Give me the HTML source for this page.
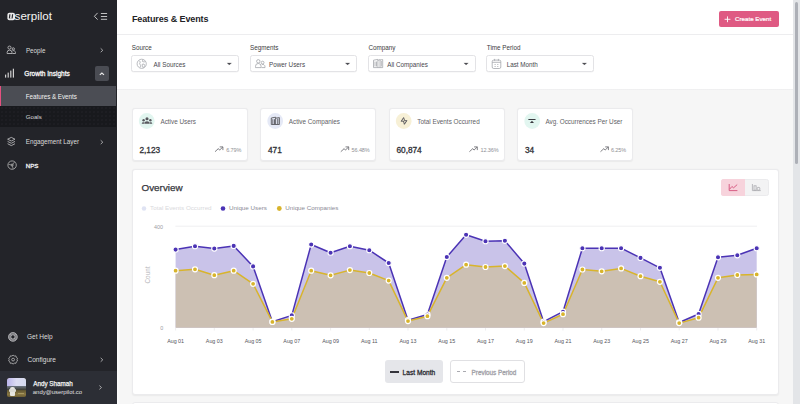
<!DOCTYPE html>
<html><head><meta charset="utf-8"><style>
html,body{margin:0;padding:0;width:800px;height:404px;overflow:hidden;background:#fff}
body{position:relative;font-family:"Liberation Sans",sans-serif}
.t{position:absolute;white-space:nowrap;line-height:1}
.ov{position:absolute;left:0;top:0}
.xl{font-family:"Liberation Sans",sans-serif;font-size:5.35px;fill:#55555c}
</style></head><body>
<div style="position:absolute;left:0px;top:0px;width:117px;height:404px;background:#232429"></div>
<div class="t" style="left:14.60px;top:10.08px;font-size:11.6px;color:#f4f4f4;">serpilot</div>
<div class="t" style="left:25.90px;top:47.57px;font-size:6.3px;color:#dcdcdc;">People</div>
<div class="t" style="left:24.30px;top:70.86px;font-size:6.55px;color:#f4f4f4;-webkit-text-stroke:0.3px #f4f4f4;">Growth Insights</div>
<div style="position:absolute;left:95px;top:66.2px;width:13.7px;height:14.4px;background:#4a4c53;border-radius:2px"></div>
<div style="position:absolute;left:0px;top:85.5px;width:116.3px;height:20.3px;background:#4b4d54"></div>
<div style="position:absolute;left:0px;top:85.5px;width:1.3px;height:20.3px;background:#e5507f"></div>
<div class="t" style="left:25.80px;top:93.57px;font-size:6.3px;color:#f2f2f2;letter-spacing:-0.05px;">Features &amp; Events</div>
<div style="position:absolute;left:0px;top:105.8px;width:116.3px;height:21.2px;background:radial-gradient(circle at 2px 2px,#212227 0.55px,rgba(0,0,0,0) 0.9px) 0 0/4px 4px,#18191d"></div>
<div class="t" style="left:25.80px;top:113.54px;font-size:6.1px;color:#dadadc;">Goals</div>
<div class="t" style="left:25.80px;top:139.47px;font-size:6.3px;color:#dcdcdc;">Engagement Layer</div>
<div class="t" style="left:25.80px;top:162.94px;font-size:6.1px;color:#f0f0f0;-webkit-text-stroke:0.3px #f0f0f0;">NPS</div>
<div class="t" style="left:27.00px;top:334.20px;font-size:6.5px;color:#dcdcdc;">Get Help</div>
<div class="t" style="left:27.40px;top:356.51px;font-size:6.6px;color:#dcdcdc;">Configure</div>
<div style="position:absolute;left:0px;top:370.9px;width:117px;height:33.1px;background:#2c2e35"></div>
<div style="position:absolute;left:7.2px;top:378.2px;width:19px;height:18.8px;border-radius:2.5px;overflow:hidden;background:#6a5c32"><div style="position:absolute;left:0;top:0;width:19px;height:7.8px;background:linear-gradient(90deg,#bab4ea,#dcdcf2 50%,#d4d9ee)"></div><div style="position:absolute;left:0;top:7.8px;width:19px;height:3.6px;background:linear-gradient(#6d7683,#3a3a30)"></div><div style="position:absolute;left:0;top:11.4px;width:19px;height:7.4px;background:linear-gradient(#5c5230,#8a7844 60%,#6b5d33)"></div><div style="position:absolute;left:3.2px;top:9.2px;width:4.2px;height:8.6px;background:#e6e5e0;border-radius:2px 2px 1px 1px"></div><div style="position:absolute;left:1.6px;top:11.2px;width:7.6px;height:2.2px;background:#dcdbd5;border-radius:1px"></div><div style="position:absolute;left:11px;top:14.8px;width:6px;height:1px;background:#a89860"></div></div>
<div class="t" style="left:33.20px;top:380.77px;font-size:6.3px;color:#f2f2f2;-webkit-text-stroke:0.25px #f2f2f2;">Andy Shamah</div>
<div class="t" style="left:32.80px;top:389.76px;font-size:5.95px;color:#e0e0e0;">andy@userpilot.co</div>
<div style="position:absolute;left:117px;top:0px;width:676px;height:404px;background:#f6f6f6"></div>
<div style="position:absolute;left:117px;top:89px;width:3px;height:315px;background:linear-gradient(90deg,#fdfdfd,#f6f6f7)"></div>
<div style="position:absolute;left:117px;top:0px;width:676px;height:89.3px;background:#fff"></div>
<div style="position:absolute;left:117px;top:89.0px;width:676px;height:1.3px;background:linear-gradient(#ececed,#f3f3f4)"></div>
<div style="position:absolute;left:117px;top:33.6px;width:676px;height:0.8px;background:#ededef"></div>
<div class="t" style="left:131.90px;top:14.98px;font-size:9.0px;color:#222226;font-weight:bold;letter-spacing:-0.12px;">Features &amp; Events</div>
<div style="position:absolute;left:719.2px;top:11px;width:59.6px;height:15.5px;background:#df5a83;border-radius:2px"></div>
<div class="t" style="left:735.00px;top:16.25px;font-size:6.2px;color:#ffffff;-webkit-text-stroke:0.2px #fff;">Create Event</div>
<div class="t" style="left:131.70px;top:44.87px;font-size:6.3px;color:#3b3b40;">Source</div>
<div style="position:absolute;left:131.2px;top:55.2px;width:107.8px;height:17.2px;border:1px solid #e3e3e6;box-sizing:border-box;border-radius:2.5px;background:#fff;box-shadow:0 0.6px 0.6px rgba(0,0,0,0.05)"></div>
<div class="t" style="left:153.50px;top:61.67px;font-size:6.3px;color:#47474d;">All Sources</div>
<div class="t" style="left:250.00px;top:44.87px;font-size:6.3px;color:#3b3b40;">Segments</div>
<div style="position:absolute;left:249.5px;top:55.2px;width:107.8px;height:17.2px;border:1px solid #e3e3e6;box-sizing:border-box;border-radius:2.5px;background:#fff;box-shadow:0 0.6px 0.6px rgba(0,0,0,0.05)"></div>
<div class="t" style="left:269.00px;top:61.67px;font-size:6.3px;color:#47474d;">Power Users</div>
<div class="t" style="left:368.50px;top:44.87px;font-size:6.3px;color:#3b3b40;">Company</div>
<div style="position:absolute;left:368.0px;top:55.2px;width:107.8px;height:17.2px;border:1px solid #e3e3e6;box-sizing:border-box;border-radius:2.5px;background:#fff;box-shadow:0 0.6px 0.6px rgba(0,0,0,0.05)"></div>
<div class="t" style="left:387.20px;top:61.67px;font-size:6.3px;color:#47474d;">All Companies</div>
<div class="t" style="left:486.80px;top:44.87px;font-size:6.3px;color:#3b3b40;">Time Period</div>
<div style="position:absolute;left:486.3px;top:55.2px;width:107.8px;height:17.2px;border:1px solid #e3e3e6;box-sizing:border-box;border-radius:2.5px;background:#fff;box-shadow:0 0.6px 0.6px rgba(0,0,0,0.05)"></div>
<div class="t" style="left:506.70px;top:61.67px;font-size:6.3px;color:#47474d;">Last Month</div>
<div style="position:absolute;left:131.8px;top:107.6px;width:116.2px;height:53.1px;background:#fff;border:1px solid #ebebed;box-sizing:border-box;border-radius:3px;box-shadow:0 0.8px 1.2px rgba(0,0,0,0.05)"></div>
<div class="t" style="left:160.45px;top:118.62px;font-size:6.35px;color:#5f5f66;">Active Users</div>
<div class="t" style="left:139.50px;top:146.07px;font-size:8.3px;color:#303036;letter-spacing:-0.05px;-webkit-text-stroke:0.3px #303036;">2,123</div>
<div class="t" style="left:226.20px;top:147.64px;font-size:5.5px;color:#8f8f95;letter-spacing:-0.12px;">6.79%</div>
<div style="position:absolute;left:260.3px;top:107.6px;width:116.2px;height:53.1px;background:#fff;border:1px solid #ebebed;box-sizing:border-box;border-radius:3px;box-shadow:0 0.8px 1.2px rgba(0,0,0,0.05)"></div>
<div class="t" style="left:288.75px;top:118.62px;font-size:6.35px;color:#5f5f66;">Active Companies</div>
<div class="t" style="left:268.00px;top:146.07px;font-size:8.3px;color:#303036;letter-spacing:-0.05px;-webkit-text-stroke:0.3px #303036;">471</div>
<div class="t" style="left:351.60px;top:147.64px;font-size:5.5px;color:#8f8f95;letter-spacing:-0.12px;">56.48%</div>
<div style="position:absolute;left:388.8px;top:107.6px;width:116.2px;height:53.1px;background:#fff;border:1px solid #ebebed;box-sizing:border-box;border-radius:3px;box-shadow:0 0.8px 1.2px rgba(0,0,0,0.05)"></div>
<div class="t" style="left:417.25px;top:118.62px;font-size:6.35px;color:#5f5f66;">Total Events Occurred</div>
<div class="t" style="left:396.50px;top:146.07px;font-size:8.3px;color:#303036;letter-spacing:-0.05px;-webkit-text-stroke:0.3px #303036;">60,874</div>
<div class="t" style="left:480.50px;top:147.64px;font-size:5.5px;color:#8f8f95;letter-spacing:-0.12px;">12.36%</div>
<div style="position:absolute;left:517.3px;top:107.6px;width:116.2px;height:53.1px;background:#fff;border:1px solid #ebebed;box-sizing:border-box;border-radius:3px;box-shadow:0 0.8px 1.2px rgba(0,0,0,0.05)"></div>
<div class="t" style="left:545.40px;top:118.62px;font-size:6.35px;color:#5f5f66;">Avg. Occurrences Per User</div>
<div class="t" style="left:525.00px;top:146.07px;font-size:8.3px;color:#303036;letter-spacing:-0.05px;-webkit-text-stroke:0.3px #303036;">34</div>
<div class="t" style="left:611.00px;top:147.64px;font-size:5.5px;color:#8f8f95;letter-spacing:-0.12px;">6.25%</div>
<div style="position:absolute;left:131.6px;top:169.4px;width:647.3px;height:225.9px;background:#fff;border:1px solid #ebebed;box-sizing:border-box;border-radius:3px;box-shadow:0 0.8px 1.5px rgba(0,0,0,0.05)"></div>
<div style="position:absolute;left:131.6px;top:402px;width:647.3px;height:10px;background:#fff;border:1px solid #ebebed;box-sizing:border-box;border-radius:3px"></div>
<div class="t" style="left:141.50px;top:182.62px;font-size:9.9px;color:#36363c;-webkit-text-stroke:0.25px #36363c;">Overview</div>
<div style="position:absolute;left:721px;top:179.1px;width:47.6px;height:16.5px;background:#f3f3f4;border:1px solid #ebebed;box-sizing:border-box;border-radius:2.5px"></div>
<div style="position:absolute;left:721px;top:179.1px;width:24px;height:16.5px;background:#f7d3dc;border-radius:2.5px 0 0 2.5px"></div>
<div class="t" style="left:150.10px;top:205.21px;font-size:6.25px;color:#d9d9dc;">Total Events Occurred</div>
<div class="t" style="left:229.00px;top:205.21px;font-size:6.25px;color:#8b8b96;">Unique Users</div>
<div class="t" style="left:285.25px;top:205.21px;font-size:6.25px;color:#8b8b96;">Unique Companies</div>
<div class="t" style="left:163.00px;top:225.43px;font-size:5.4px;color:#9c9ca2;transform:translateX(-100%);">400</div>
<div class="t" style="left:163.20px;top:325.53px;font-size:5.4px;color:#9c9ca2;transform:translateX(-100%);">0</div>
<div class="t" style="left:147.6px;top:274.7px;font-size:6.35px;color:#b3b3b7;transform:translate(-50%,-50%) rotate(-90deg);line-height:1">Count</div>
<div style="position:absolute;left:384.6px;top:360px;width:58.4px;height:23px;background:#e5e6ea;border-radius:3px"></div>
<div style="position:absolute;left:390px;top:371.3px;width:8.6px;height:1.3px;background:#35353c"></div>
<div class="t" style="left:402.60px;top:369.71px;font-size:6.6px;color:#2e2e34;-webkit-text-stroke:0.3px #2e2e34;">Last Month</div>
<div style="position:absolute;left:450.2px;top:360px;width:75.2px;height:23px;background:#fff;border:1px solid #e0e0e3;box-sizing:border-box;border-radius:3px"></div>
<div style="position:absolute;left:457px;top:371.2px;width:3.4px;height:1px;background:#aaaab0"></div>
<div style="position:absolute;left:462.6px;top:371.2px;width:3.4px;height:1px;background:#aaaab0"></div>
<div class="t" style="left:471.60px;top:369.62px;font-size:6.35px;color:#a2a2a8;-webkit-text-stroke:0.3px #a2a2a8;">Previous Period</div>
<div style="position:absolute;left:793px;top:0px;width:7px;height:404px;background:#e3e5e8"></div>
<div style="position:absolute;left:794.9px;top:1.9px;width:3.4px;height:162.1px;background:#adb0b7;border-radius:2px"></div>
<svg class="ov" width="800" height="404" viewBox="0 0 800 404">
<rect x="7.4" y="12.7" width="7.6" height="7.6" rx="2" fill="#ececec"/>
<path d="M9.9,14.2 L9.4,18.4 M12.6,14.2 L12.1,18.4" stroke="#2a2b30" stroke-width="1.2"/><path d="M9.5,18.6 L12.0,18.6" stroke="#9a9a9e" stroke-width="0.6"/>
<path d="M97.6,12.9 L94.4,16.3 L97.6,19.6" fill="none" stroke="#d4d4d4" stroke-width="0.9"/><g stroke="#d4d4d4" stroke-width="0.9"><line x1="100.9" y1="13.5" x2="107.1" y2="13.5"/><line x1="100.9" y1="16.5" x2="107.1" y2="16.5"/><line x1="100.9" y1="19.3" x2="107.1" y2="19.3"/></g>
<g fill="none" stroke="#b2b2b4" stroke-width="0.95"><circle cx="9.5" cy="47.6" r="1.55"/><path d="M7.1,53.5 v-0.9 a2.45,2.45 0 0 1 4.9,0 v0.9 z"/><circle cx="13.3" cy="48.9" r="1.15"/><path d="M12.5,50.9 a2.0,2.0 0 0 1 3.0,1.7 v0.9 h-3.2"/></g>
<path d="M100.7,48.4 L102.8,50.3 L100.7,52.2" fill="none" stroke="#b2b2b4" stroke-width="0.9"/>
<g fill="#d0d0d0"><rect x="5.0" y="74.6" width="1.2" height="3.0"/><rect x="7.6" y="72.6" width="1.2" height="5.0"/><rect x="10.2" y="70.6" width="1.2" height="7.0"/><rect x="12.8" y="68.7" width="1.2" height="8.9"/></g>
<path d="M99.8,74.9 L101.9,73.0 L104.0,74.9" fill="none" stroke="#ececec" stroke-width="1.1"/>
<g fill="none" stroke="#b2b2b4" stroke-width="0.9" stroke-linejoin="round"><path d="M11.3,137.4 L15.0,139.2 L11.3,141.0 L7.6,139.2 Z"/><path d="M7.6,141.4 L11.3,143.3 L15.0,141.4"/><path d="M7.6,143.7 L11.3,145.6 L15.0,143.7"/></g>
<path d="M100.7,140.3 L102.8,142.2 L100.7,144.1" fill="none" stroke="#b2b2b4" stroke-width="0.9"/>
<circle cx="12.1" cy="165.1" r="4.2" fill="none" stroke="#a9a9a9" stroke-width="0.9"/><circle cx="12.1" cy="165.1" r="1.5" fill="#8c8c8c"/><g stroke="#8f8f8f" stroke-width="0.9"><path d="M12.1,165.1 L8.3,164.2 M12.1,165.1 L14.6,161.9 M12.1,165.1 L13.2,169.0"/></g>
<circle cx="12.9" cy="336.9" r="3.3" fill="none" stroke="#7c7c80" stroke-width="2.3"/><circle cx="12.9" cy="336.9" r="4.4" fill="none" stroke="#c2c2c4" stroke-width="0.75"/><circle cx="12.9" cy="336.9" r="2.1" fill="none" stroke="#c2c2c4" stroke-width="0.7"/><g stroke="#c2c2c4" stroke-width="0.8"><path d="M10.4,334.4 L11.4,335.4 M15.4,334.4 L14.4,335.4 M10.4,339.4 L11.4,338.4 M15.4,339.4 L14.4,338.4"/></g>
<g fill="none" stroke="#b2b2b4" stroke-width="0.85"><circle cx="13.1" cy="359.6" r="1.4"/><path d="M13.1,355.2 L14.4,356.0 L15.9,355.9 L16.3,357.3 L17.5,358.2 L17.0,359.6 L17.5,361.0 L16.3,361.9 L15.9,363.3 L14.4,363.2 L13.1,364.0 L11.8,363.2 L10.3,363.3 L9.9,361.9 L8.7,361.0 L9.2,359.6 L8.7,358.2 L9.9,357.3 L10.3,355.9 L11.8,356.0 Z"/></g>
<path d="M100.7,357.9 L102.8,359.8 L100.7,361.7" fill="none" stroke="#b2b2b4" stroke-width="0.9"/>
<path d="M99.4,385.6 L101.5,387.5 L99.4,389.4" fill="none" stroke="#b2b2b4" stroke-width="0.9"/>
<path d="M727.5,16.4 v5.8 M724.6,19.3 h5.8" stroke="#fff" stroke-width="0.9"/>
<path d="M227.10,62.9 L231.50,62.9 L229.30,65.1 Z" fill="#4c4c52" stroke="#4c4c52" stroke-width="0.2" stroke-linejoin="round"/>
<path d="M345.40,62.9 L349.80,62.9 L347.60,65.1 Z" fill="#4c4c52" stroke="#4c4c52" stroke-width="0.2" stroke-linejoin="round"/>
<path d="M463.90,62.9 L468.30,62.9 L466.10,65.1 Z" fill="#4c4c52" stroke="#4c4c52" stroke-width="0.2" stroke-linejoin="round"/>
<path d="M582.20,62.9 L586.60,62.9 L584.40,65.1 Z" fill="#4c4c52" stroke="#4c4c52" stroke-width="0.2" stroke-linejoin="round"/>
<g fill="none" stroke="#a3a6ab" stroke-width="0.75"><circle cx="141.7" cy="63.8" r="4.6"/><path d="M139.2,60.6 L140.3,62.0 L139.6,63.8 L140.6,65.3 L140.2,67.4 M143.0,59.5 L142.4,61.4 L144.2,62.0 L145.3,61.2 M142.2,64.3 L144.0,64.0 L144.8,65.6 L143.5,67.5 L142.3,66.8 Z"/></g>
<g fill="none" stroke="#a3a6ab" stroke-width="0.8"><circle cx="258.3" cy="61.3" r="1.7"/><path d="M255.5,67.6 v-1.3 a2.8,2.8 0 0 1 5.6,0 v1.3 z"/><circle cx="262.6" cy="62.6" r="1.4"/><path d="M261.8,64.6 a2.3,2.3 0 0 1 3.2,2.0 v1.0 h-3.4"/></g>
<g fill="none" stroke="#a3a6ab" stroke-width="0.8"><path d="M373.5,67.6 V60.2 L377.9,59.4 V67.6 M377.9,60.4 L380.0,59.6 V67.6 M380.0,60.0 L382.7,59.6 V67.6 H373.5"/><path d="M375.0,61.5 V66.5 M376.5,61.5 V66.5 M381.3,61.0 V66.5"/></g>
<g fill="none" stroke="#a3a6ab" stroke-width="0.8"><rect x="492.2" y="60.1" width="8.6" height="8.4" rx="1.5"/><path d="M492.2,62.3 H500.8 M494.6,58.9 V60.8 M498.4,58.9 V60.8"/></g><g fill="#a3a6ab"><rect x="494.6" y="64.0" width="1.0" height="0.9"/><rect x="497.3" y="64.0" width="1.0" height="0.9"/><rect x="494.6" y="66.0" width="1.0" height="0.9"/><rect x="497.3" y="66.0" width="1.0" height="0.9"/></g>
<circle cx="146.70" cy="121.0" r="7.9" fill="#e2f6f0"/>
<path d="M215.0,151.7 L218.4,148.6 L219.6,150.1 L222.8,147.0 M219.7,146.9 L222.9,146.9 L222.9,150.1" fill="none" stroke="#6a6a70" stroke-width="0.85"/>
<circle cx="275.20" cy="121.0" r="7.9" fill="#e5e9f6"/>
<path d="M340.8,151.7 L344.2,148.6 L345.4,150.1 L348.6,147.0 M345.5,146.9 L348.7,146.9 L348.7,150.1" fill="none" stroke="#6a6a70" stroke-width="0.85"/>
<circle cx="403.70" cy="121.0" r="7.9" fill="#f7f0d6"/>
<path d="M469.4,151.7 L472.8,148.6 L474.0,150.1 L477.2,147.0 M474.1,146.9 L477.3,146.9 L477.3,150.1" fill="none" stroke="#6a6a70" stroke-width="0.85"/>
<circle cx="532.20" cy="121.0" r="7.9" fill="#e2f6f0"/>
<path d="M600.5,151.7 L603.9,148.6 L605.1,150.1 L608.3,147.0 M605.2,146.9 L608.4,146.9 L608.4,150.1" fill="none" stroke="#6a6a70" stroke-width="0.85"/>
<g fill="#58585e"><circle cx="147.0" cy="118.7" r="1.55"/><circle cx="143.6" cy="120.3" r="1.2"/><circle cx="150.4" cy="120.3" r="1.2"/><path d="M144.5,123.8 V122.9 a2.5,1.6 0 0 1 5,0 V123.8 z"/><path d="M141.8,123.8 V123.2 a1.6,1.2 0 0 1 3.0,-0.4 L144.0,123.8 z"/><path d="M152.2,123.8 V123.2 a1.6,1.2 0 0 0 -3.0,-0.4 L150.0,123.8 z"/></g>
<g fill="none" stroke="#5a5a60" stroke-width="0.9"><path d="M271.3,124.5 V118.0 L275.6,117.2 V124.5 M275.6,118.2 L279.4,117.6 V124.5 H271.3"/></g><g fill="#5a5a60"><rect x="272.4" y="119.2" width="0.9" height="5"/><rect x="274.0" y="119.2" width="0.9" height="5"/><rect x="277.3" y="118.6" width="1.0" height="5.6"/></g>
<path d="M403.6,117.6 L401.2,121.3 L403.5,121.0 L404.4,124.3 L406.9,120.6 L404.7,120.8 Z" fill="none" stroke="#4a4a50" stroke-width="0.9" stroke-linejoin="round"/>
<g fill="#3a3a40"><rect x="528.3" y="118.9" width="7.3" height="1.2" rx="0.4"/><path d="M531.95,120.7 L534.0,122.9 L529.9,122.9 Z"/></g>
<path d="M729.2,184.0 V190.6 H737.4 M729.6,189.2 L731.9,186.5 L733.6,187.8 L737.2,184.6" fill="none" stroke="#d4507a" stroke-width="0.9"/><g fill="none" stroke="#a9a9ae" stroke-width="0.8"><path d="M752.4,184.0 V190.6 H760.8"/><rect x="754.0" y="185.8" width="2.1" height="4.4"/><rect x="757.2" y="187.4" width="2.6" height="2.8" rx="0.8"/></g>
<circle cx="144" cy="208.5" r="2.25" fill="#dfe3f3"/><circle cx="223" cy="208.5" r="2.3" fill="#4b33b5"/><circle cx="279.3" cy="208.5" r="2.4" fill="#d8b42c"/>
<line x1="175.4" y1="226.2" x2="757" y2="226.2" stroke="#ebebed" stroke-width="0.8"/>
<path d="M175.6,327.8 L175.6,249.6 L195.0,246.2 L214.3,248.5 L233.7,245.9 L253.1,266.4 L272.4,321.7 L291.8,315.4 L311.2,244.5 L330.6,252.7 L349.9,246.2 L369.3,250.2 L388.7,263.0 L408.0,320.2 L427.4,314.5 L446.8,257.0 L466.1,234.8 L485.5,241.2 L504.9,240.8 L524.3,263.6 L543.6,321.7 L563.0,311.7 L582.4,248.2 L601.7,248.2 L621.1,248.2 L640.5,257.9 L659.9,267.8 L679.2,322.5 L698.6,314.0 L718.0,257.3 L737.3,255.3 L756.7,248.2 L756.7,327.8 Z" fill="#c9c3e9"/>
<path d="M175.6,327.8 L175.6,270.7 L195.0,269.3 L214.3,275.2 L233.7,270.7 L253.1,283.8 L272.4,321.9 L291.8,318.8 L311.2,270.7 L330.6,275.3 L349.9,270.1 L369.3,273.0 L388.7,280.6 L408.0,321.1 L427.4,316.2 L446.8,277.8 L466.1,264.7 L485.5,267.0 L504.9,266.1 L524.3,282.9 L543.6,323.1 L563.0,314.2 L582.4,269.5 L601.7,271.3 L621.1,268.4 L640.5,276.2 L659.9,281.8 L679.2,323.1 L698.6,317.7 L718.0,277.8 L737.3,275.0 L756.7,274.4 L756.7,327.8 Z" fill="#ccc0b3"/>
<line x1="175.6" y1="328" x2="175.6" y2="330.5" stroke="#e2e2e4" stroke-width="0.6"/>
<line x1="214.3" y1="328" x2="214.3" y2="330.5" stroke="#e2e2e4" stroke-width="0.6"/>
<line x1="253.1" y1="328" x2="253.1" y2="330.5" stroke="#e2e2e4" stroke-width="0.6"/>
<line x1="291.8" y1="328" x2="291.8" y2="330.5" stroke="#e2e2e4" stroke-width="0.6"/>
<line x1="330.6" y1="328" x2="330.6" y2="330.5" stroke="#e2e2e4" stroke-width="0.6"/>
<line x1="369.3" y1="328" x2="369.3" y2="330.5" stroke="#e2e2e4" stroke-width="0.6"/>
<line x1="408.0" y1="328" x2="408.0" y2="330.5" stroke="#e2e2e4" stroke-width="0.6"/>
<line x1="446.8" y1="328" x2="446.8" y2="330.5" stroke="#e2e2e4" stroke-width="0.6"/>
<line x1="485.5" y1="328" x2="485.5" y2="330.5" stroke="#e2e2e4" stroke-width="0.6"/>
<line x1="524.3" y1="328" x2="524.3" y2="330.5" stroke="#e2e2e4" stroke-width="0.6"/>
<line x1="563.0" y1="328" x2="563.0" y2="330.5" stroke="#e2e2e4" stroke-width="0.6"/>
<line x1="601.7" y1="328" x2="601.7" y2="330.5" stroke="#e2e2e4" stroke-width="0.6"/>
<line x1="640.5" y1="328" x2="640.5" y2="330.5" stroke="#e2e2e4" stroke-width="0.6"/>
<line x1="679.2" y1="328" x2="679.2" y2="330.5" stroke="#e2e2e4" stroke-width="0.6"/>
<line x1="718.0" y1="328" x2="718.0" y2="330.5" stroke="#e2e2e4" stroke-width="0.6"/>
<line x1="756.7" y1="328" x2="756.7" y2="330.5" stroke="#e2e2e4" stroke-width="0.6"/>
<polyline points="175.6,249.6 195.0,246.2 214.3,248.5 233.7,245.9 253.1,266.4 272.4,321.7 291.8,315.4 311.2,244.5 330.6,252.7 349.9,246.2 369.3,250.2 388.7,263.0 408.0,320.2 427.4,314.5 446.8,257.0 466.1,234.8 485.5,241.2 504.9,240.8 524.3,263.6 543.6,321.7 563.0,311.7 582.4,248.2 601.7,248.2 621.1,248.2 640.5,257.9 659.9,267.8 679.2,322.5 698.6,314.0 718.0,257.3 737.3,255.3 756.7,248.2" fill="none" stroke="#4b33b5" stroke-width="1.5" stroke-linejoin="round"/>
<polyline points="175.6,270.7 195.0,269.3 214.3,275.2 233.7,270.7 253.1,283.8 272.4,321.9 291.8,318.8 311.2,270.7 330.6,275.3 349.9,270.1 369.3,273.0 388.7,280.6 408.0,321.1 427.4,316.2 446.8,277.8 466.1,264.7 485.5,267.0 504.9,266.1 524.3,282.9 543.6,323.1 563.0,314.2 582.4,269.5 601.7,271.3 621.1,268.4 640.5,276.2 659.9,281.8 679.2,323.1 698.6,317.7 718.0,277.8 737.3,275.0 756.7,274.4" fill="none" stroke="#d8b42c" stroke-width="1.5" stroke-linejoin="round"/>
<circle cx="175.6" cy="249.6" r="2.6" fill="#4b33b5" stroke="#fff" stroke-width="1.1"/>
<circle cx="195.0" cy="246.2" r="2.6" fill="#4b33b5" stroke="#fff" stroke-width="1.1"/>
<circle cx="214.3" cy="248.5" r="2.6" fill="#4b33b5" stroke="#fff" stroke-width="1.1"/>
<circle cx="233.7" cy="245.9" r="2.6" fill="#4b33b5" stroke="#fff" stroke-width="1.1"/>
<circle cx="253.1" cy="266.4" r="2.6" fill="#4b33b5" stroke="#fff" stroke-width="1.1"/>
<circle cx="272.4" cy="321.7" r="2.6" fill="#4b33b5" stroke="#fff" stroke-width="1.1"/>
<circle cx="291.8" cy="315.4" r="2.6" fill="#4b33b5" stroke="#fff" stroke-width="1.1"/>
<circle cx="311.2" cy="244.5" r="2.6" fill="#4b33b5" stroke="#fff" stroke-width="1.1"/>
<circle cx="330.6" cy="252.7" r="2.6" fill="#4b33b5" stroke="#fff" stroke-width="1.1"/>
<circle cx="349.9" cy="246.2" r="2.6" fill="#4b33b5" stroke="#fff" stroke-width="1.1"/>
<circle cx="369.3" cy="250.2" r="2.6" fill="#4b33b5" stroke="#fff" stroke-width="1.1"/>
<circle cx="388.7" cy="263.0" r="2.6" fill="#4b33b5" stroke="#fff" stroke-width="1.1"/>
<circle cx="408.0" cy="320.2" r="2.6" fill="#4b33b5" stroke="#fff" stroke-width="1.1"/>
<circle cx="427.4" cy="314.5" r="2.6" fill="#4b33b5" stroke="#fff" stroke-width="1.1"/>
<circle cx="446.8" cy="257.0" r="2.6" fill="#4b33b5" stroke="#fff" stroke-width="1.1"/>
<circle cx="466.1" cy="234.8" r="2.6" fill="#4b33b5" stroke="#fff" stroke-width="1.1"/>
<circle cx="485.5" cy="241.2" r="2.6" fill="#4b33b5" stroke="#fff" stroke-width="1.1"/>
<circle cx="504.9" cy="240.8" r="2.6" fill="#4b33b5" stroke="#fff" stroke-width="1.1"/>
<circle cx="524.3" cy="263.6" r="2.6" fill="#4b33b5" stroke="#fff" stroke-width="1.1"/>
<circle cx="543.6" cy="321.7" r="2.6" fill="#4b33b5" stroke="#fff" stroke-width="1.1"/>
<circle cx="563.0" cy="311.7" r="2.6" fill="#4b33b5" stroke="#fff" stroke-width="1.1"/>
<circle cx="582.4" cy="248.2" r="2.6" fill="#4b33b5" stroke="#fff" stroke-width="1.1"/>
<circle cx="601.7" cy="248.2" r="2.6" fill="#4b33b5" stroke="#fff" stroke-width="1.1"/>
<circle cx="621.1" cy="248.2" r="2.6" fill="#4b33b5" stroke="#fff" stroke-width="1.1"/>
<circle cx="640.5" cy="257.9" r="2.6" fill="#4b33b5" stroke="#fff" stroke-width="1.1"/>
<circle cx="659.9" cy="267.8" r="2.6" fill="#4b33b5" stroke="#fff" stroke-width="1.1"/>
<circle cx="679.2" cy="322.5" r="2.6" fill="#4b33b5" stroke="#fff" stroke-width="1.1"/>
<circle cx="698.6" cy="314.0" r="2.6" fill="#4b33b5" stroke="#fff" stroke-width="1.1"/>
<circle cx="718.0" cy="257.3" r="2.6" fill="#4b33b5" stroke="#fff" stroke-width="1.1"/>
<circle cx="737.3" cy="255.3" r="2.6" fill="#4b33b5" stroke="#fff" stroke-width="1.1"/>
<circle cx="756.7" cy="248.2" r="2.6" fill="#4b33b5" stroke="#fff" stroke-width="1.1"/>
<circle cx="175.6" cy="270.7" r="2.5" fill="#d8b42c" stroke="#fff" stroke-width="1.2"/>
<circle cx="195.0" cy="269.3" r="2.5" fill="#d8b42c" stroke="#fff" stroke-width="1.2"/>
<circle cx="214.3" cy="275.2" r="2.5" fill="#d8b42c" stroke="#fff" stroke-width="1.2"/>
<circle cx="233.7" cy="270.7" r="2.5" fill="#d8b42c" stroke="#fff" stroke-width="1.2"/>
<circle cx="253.1" cy="283.8" r="2.5" fill="#d8b42c" stroke="#fff" stroke-width="1.2"/>
<circle cx="272.4" cy="321.9" r="2.5" fill="#d8b42c" stroke="#fff" stroke-width="1.2"/>
<circle cx="291.8" cy="318.8" r="2.5" fill="#d8b42c" stroke="#fff" stroke-width="1.2"/>
<circle cx="311.2" cy="270.7" r="2.5" fill="#d8b42c" stroke="#fff" stroke-width="1.2"/>
<circle cx="330.6" cy="275.3" r="2.5" fill="#d8b42c" stroke="#fff" stroke-width="1.2"/>
<circle cx="349.9" cy="270.1" r="2.5" fill="#d8b42c" stroke="#fff" stroke-width="1.2"/>
<circle cx="369.3" cy="273.0" r="2.5" fill="#d8b42c" stroke="#fff" stroke-width="1.2"/>
<circle cx="388.7" cy="280.6" r="2.5" fill="#d8b42c" stroke="#fff" stroke-width="1.2"/>
<circle cx="408.0" cy="321.1" r="2.5" fill="#d8b42c" stroke="#fff" stroke-width="1.2"/>
<circle cx="427.4" cy="316.2" r="2.5" fill="#d8b42c" stroke="#fff" stroke-width="1.2"/>
<circle cx="446.8" cy="277.8" r="2.5" fill="#d8b42c" stroke="#fff" stroke-width="1.2"/>
<circle cx="466.1" cy="264.7" r="2.5" fill="#d8b42c" stroke="#fff" stroke-width="1.2"/>
<circle cx="485.5" cy="267.0" r="2.5" fill="#d8b42c" stroke="#fff" stroke-width="1.2"/>
<circle cx="504.9" cy="266.1" r="2.5" fill="#d8b42c" stroke="#fff" stroke-width="1.2"/>
<circle cx="524.3" cy="282.9" r="2.5" fill="#d8b42c" stroke="#fff" stroke-width="1.2"/>
<circle cx="543.6" cy="323.1" r="2.5" fill="#d8b42c" stroke="#fff" stroke-width="1.2"/>
<circle cx="563.0" cy="314.2" r="2.5" fill="#d8b42c" stroke="#fff" stroke-width="1.2"/>
<circle cx="582.4" cy="269.5" r="2.5" fill="#d8b42c" stroke="#fff" stroke-width="1.2"/>
<circle cx="601.7" cy="271.3" r="2.5" fill="#d8b42c" stroke="#fff" stroke-width="1.2"/>
<circle cx="621.1" cy="268.4" r="2.5" fill="#d8b42c" stroke="#fff" stroke-width="1.2"/>
<circle cx="640.5" cy="276.2" r="2.5" fill="#d8b42c" stroke="#fff" stroke-width="1.2"/>
<circle cx="659.9" cy="281.8" r="2.5" fill="#d8b42c" stroke="#fff" stroke-width="1.2"/>
<circle cx="679.2" cy="323.1" r="2.5" fill="#d8b42c" stroke="#fff" stroke-width="1.2"/>
<circle cx="698.6" cy="317.7" r="2.5" fill="#d8b42c" stroke="#fff" stroke-width="1.2"/>
<circle cx="718.0" cy="277.8" r="2.5" fill="#d8b42c" stroke="#fff" stroke-width="1.2"/>
<circle cx="737.3" cy="275.0" r="2.5" fill="#d8b42c" stroke="#fff" stroke-width="1.2"/>
<circle cx="756.7" cy="274.4" r="2.5" fill="#d8b42c" stroke="#fff" stroke-width="1.2"/>
<text x="175.6" y="342.8" text-anchor="middle" class="xl">Aug 01</text>
<text x="214.3" y="342.8" text-anchor="middle" class="xl">Aug 03</text>
<text x="253.1" y="342.8" text-anchor="middle" class="xl">Aug 05</text>
<text x="291.8" y="342.8" text-anchor="middle" class="xl">Aug 07</text>
<text x="330.6" y="342.8" text-anchor="middle" class="xl">Aug 09</text>
<text x="369.3" y="342.8" text-anchor="middle" class="xl">Aug 11</text>
<text x="408.0" y="342.8" text-anchor="middle" class="xl">Aug 13</text>
<text x="446.8" y="342.8" text-anchor="middle" class="xl">Aug 15</text>
<text x="485.5" y="342.8" text-anchor="middle" class="xl">Aug 17</text>
<text x="524.3" y="342.8" text-anchor="middle" class="xl">Aug 19</text>
<text x="563.0" y="342.8" text-anchor="middle" class="xl">Aug 21</text>
<text x="601.7" y="342.8" text-anchor="middle" class="xl">Aug 23</text>
<text x="640.5" y="342.8" text-anchor="middle" class="xl">Aug 25</text>
<text x="679.2" y="342.8" text-anchor="middle" class="xl">Aug 27</text>
<text x="718.0" y="342.8" text-anchor="middle" class="xl">Aug 29</text>
<text x="756.7" y="342.8" text-anchor="middle" class="xl">Aug 31</text>
</svg>
</body></html>
